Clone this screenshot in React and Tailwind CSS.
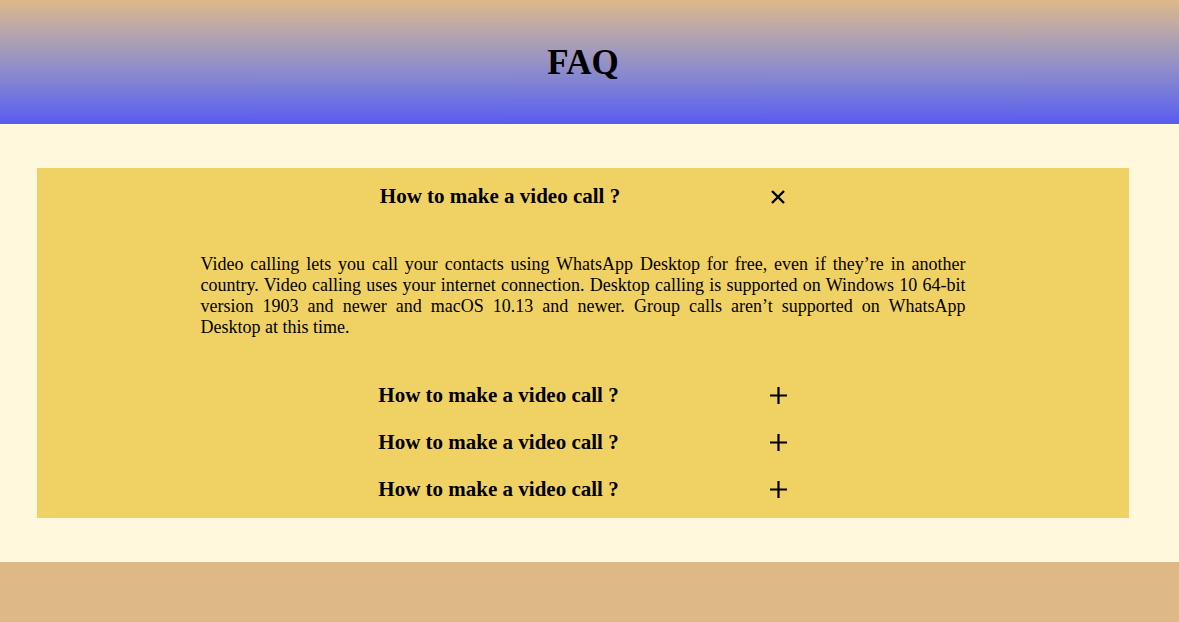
const faqs = [
  {
    q: "How to make a video call ?",
    a: "Video calling lets you call your contacts using WhatsApp Desktop for free, even if they’re in another country. Video calling uses your internet connection. Desktop calling is supported on Windows 10 64-bit version 1903 and newer and macOS 10.13 and newer. Group calls aren’t supported on WhatsApp Desktop at this time.",
    open: true,
  },
  { q: "How to make a video call ?", a: "", open: false },
  { q: "How to make a video call ?", a: "", open: false },
  { q: "How to make a video call ?", a: "", open: false },
];

function CloseIcon() {
  return (
    <svg width="16" height="16" viewBox="0 0 16 16" className="block">
      <path d="M2 2 L14 14 M14 2 L2 14" stroke="black" strokeWidth="2.4" />
    </svg>
  );
}

function PlusIcon() {
  return (
    <svg width="19" height="19" viewBox="0 0 19 19" className="block">
      <path d="M9.5 1 V18 M1 9.5 H18" stroke="black" strokeWidth="2.2" />
    </svg>
  );
}

function App() {
  return (
    <div className="min-h-screen flex flex-col font-['Liberation_Serif',serif] text-black">
      {/* Header */}
      <div className="h-[124px] flex items-center bg-gradient-to-b from-[#deb887] to-[#5a5aef]">
        <div className="w-[1166px] flex justify-center">
          <h1 className="text-[35px] font-bold leading-none">FAQ</h1>
        </div>
      </div>

      {/* Body */}
      <div className="bg-[#fff8dc] pl-[37px] pr-[50px] py-[44px]">
        <div className="bg-[#f0d264] pt-[5px] pb-[5px]">
          {faqs.map((item, i) => (
            <div key={i}>
              <div className="h-[47px] flex items-center justify-center gap-[150px]">
                <span className="text-[21px] font-bold leading-[23px]">{item.q}</span>
                {item.open ? <CloseIcon /> : <PlusIcon />}
              </div>
              {item.open && (
                <p className="w-[765px] mx-auto text-justify text-[18px] leading-[21px] pt-[34px] pb-[34px]">
                  {item.a}
                </p>
              )}
            </div>
          ))}
        </div>
      </div>

      {/* Footer */}
      <div className="flex-1 bg-[#deb887] min-h-[60px]"></div>
    </div>
  );
}

export default App;
